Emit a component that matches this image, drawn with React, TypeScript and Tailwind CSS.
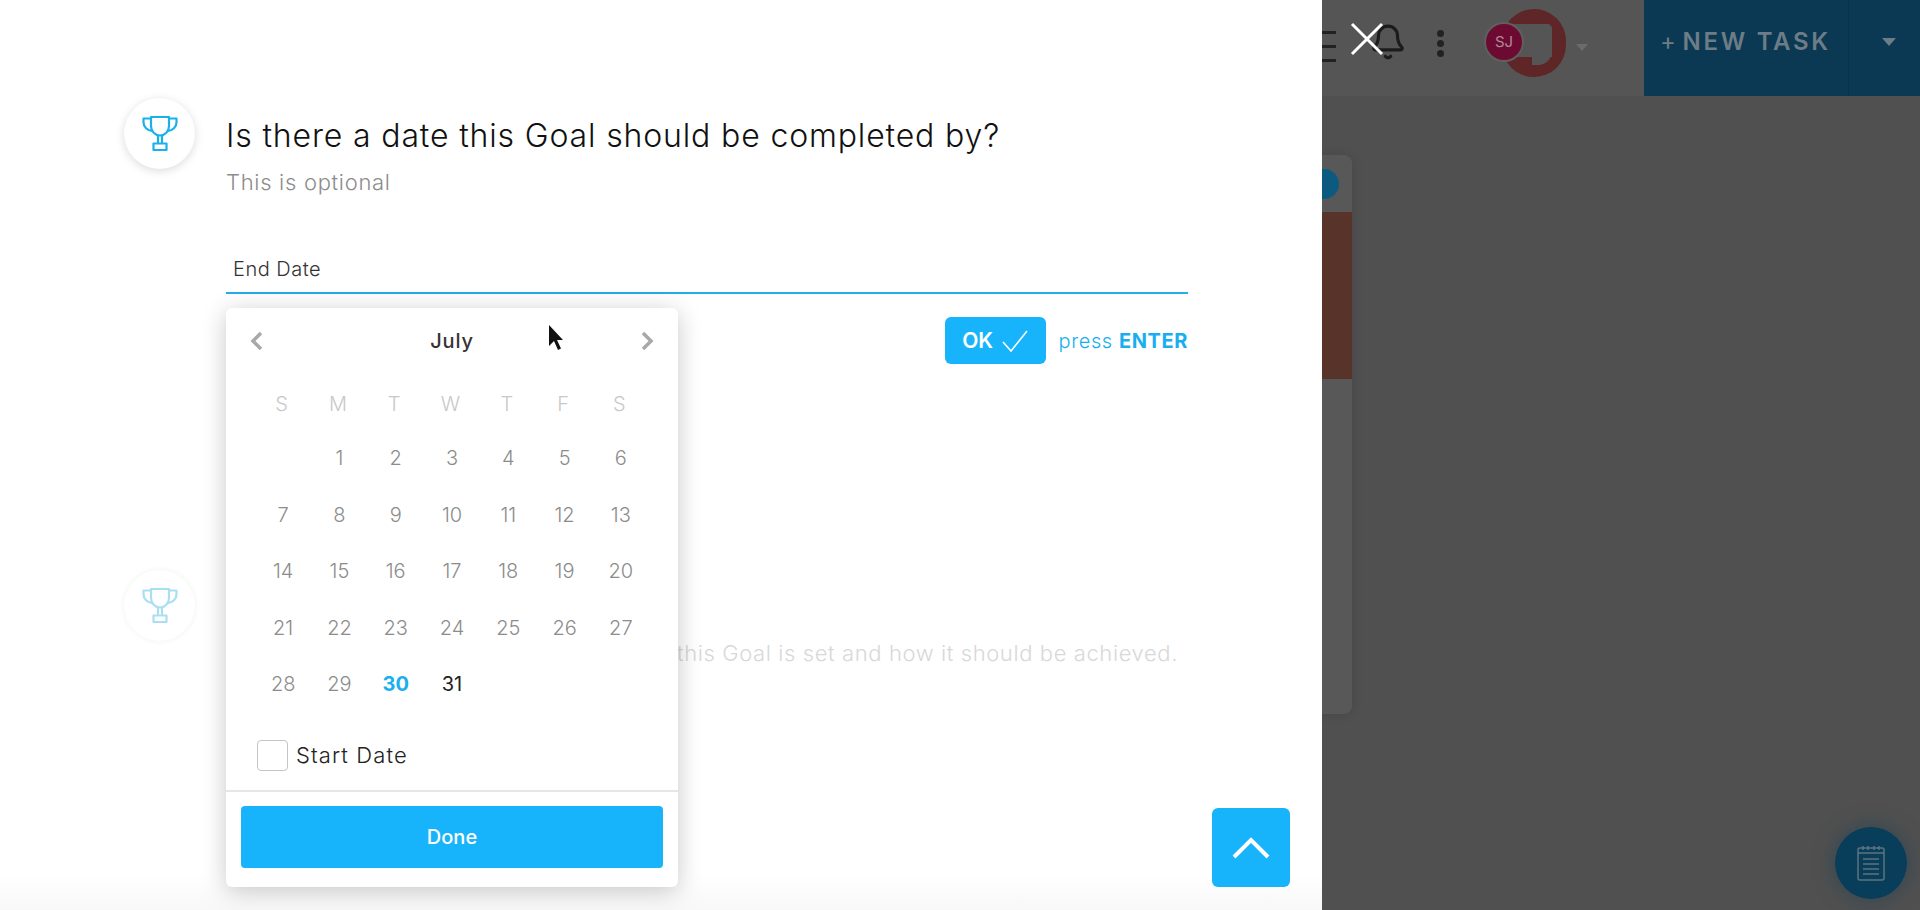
import { Bell } from "lucide-react";

const weeks = [
  ["", "1", "2", "3", "4", "5", "6"],
  ["7", "8", "9", "10", "11", "12", "13"],
  ["14", "15", "16", "17", "18", "19", "20"],
  ["21", "22", "23", "24", "25", "26", "27"],
  ["28", "29", "30", "31", "", "", ""],
];

function Trophy({ className }: { className?: string }) {
  return (
    <svg viewBox="0 0 36 36" className={className} fill="none" stroke="currentColor" strokeWidth="2.2" strokeLinejoin="round">
      <path d="M9 1.500h18v9c0 5.500-4 9.500-9 9.500s-9-4-9-9.500z" />
      <path d="M9 3H1.500v4c0 4.500 4 8 8.500 8.500M27 3h7.500v4c0 4.500-4 8-8.500 8.500" />
      <path d="M16 20v7h-1M20 20v7h1" />
      <rect x="11.500" y="28" width="13" height="6.500" />
    </svg>
  );
}

function Caret({ className }: { className?: string }) {
  return <div className={`h-0 w-0 border-x-[6px] border-t-[7px] border-x-transparent ${className}`} />;
}

function Background() {
  return (
    <div className="relative flex h-full flex-1 flex-col overflow-hidden bg-[#505050]">
      <header className="flex h-24 flex-none items-center bg-[#555555]">
        <div className="flex w-[14px] flex-none flex-col gap-[11px] self-start pt-[31px]">
          <div className="h-[3px] bg-[#222222]" />
          <div className="h-[3px] bg-[#222222]" />
          <div className="h-[3px] bg-[#222222]" />
        </div>
        <Bell className="mb-[12px] ml-[33px] h-[38px] w-[38px] flex-none text-[#1c1c1c]" strokeWidth={2} />
        <div className="mb-[10px] ml-[30px] flex flex-none flex-col gap-[3px]">
          <div className="h-[7px] w-[7px] rounded-full bg-[#222222]" />
          <div className="h-[7px] w-[7px] rounded-full bg-[#222222]" />
          <div className="h-[7px] w-[7px] rounded-full bg-[#222222]" />
        </div>
        <div className="relative mb-[10px] ml-[41px] h-[68px] w-[81px] flex-none">
          <div className="absolute left-[17px] top-0 h-[68px] w-[64px] rounded-full bg-[#5e2626]" />
          <div className="absolute left-[28px] top-[15px] h-[33px] w-[39px] rounded-tr-[5px] bg-[#555555]" />
          <div className="absolute left-[47px] top-[15px] h-[41px] w-[20px] rounded-br-[14px] rounded-tr-[5px] bg-[#555555]" />
          <div className="absolute left-[-1px] top-[13px] flex h-[40px] w-[40px] items-center justify-center rounded-full border-2 border-[#5f5f5f] bg-[#6d0a31] text-[15px] text-[#b08a9a]">
            SJ
          </div>
        </div>
        <Caret className="mb-[2px] ml-[10px] flex-none border-t-[#6b6b6b]" />
        <div className="ml-[56px] flex h-full flex-1 items-center bg-[#0b3852]">
          <div className="flex h-full w-[205px] items-center whitespace-nowrap border-r border-[#0d3248] pb-[13px] pl-[16px] text-[24px] font-semibold tracking-[2.7px] text-[#6c7d87]">
            <span className="mr-[4px] font-normal">+</span>NEW TASK
          </div>
          <Caret className="mb-[12px] ml-[33px] border-x-[7px] border-t-[8px] border-t-[#6c7d87]" />
        </div>
      </header>
      <div className="ml-[-200px] mt-[59px] h-[559px] w-[230px] flex-none rounded-[8px] bg-[#585858] pt-[57px] shadow-[0_0_12px_rgba(0,0,0,0.12)]">
        <div className="h-[167px] bg-[#57332a]" />
      </div>
      <div className="absolute left-0 top-[169px] h-[30px] w-[17px] rounded-r-full bg-[#0c5a80]" />
      <button className="absolute bottom-[11px] right-[13px] flex h-[72px] w-[72px] items-center justify-center rounded-full bg-[#093e5a] shadow-[0_0_20px_rgba(9,62,90,0.5)]">
        <svg viewBox="0 0 28 36" className="h-[36px] w-[28px]" fill="none" stroke="#5d7382" strokeWidth="1.500">
          <rect x="1" y="3" width="26" height="32" rx="2" />
          <path d="M1 8h26M6 1v4M11 1v4M17 1v4M22 1v4M6 14h16M6 19h16M6 24h16M6 29h16" />
        </svg>
      </button>
    </div>
  );
}

function DatePopover() {
  return (
    <div className="absolute left-0 top-[14px] z-10 w-[452px] rounded-[6px] bg-white shadow-[0_4px_24px_rgba(0,0,0,0.22)]">
      <div className="flex h-[66px] items-center justify-between px-[23px]">
        <svg viewBox="0 0 14 20" className="h-[20px] w-[14px]" fill="none" stroke="#a8a8a8" strokeWidth="3.500"><path d="M12 2 4 10l8 8" /></svg>
        <span className="text-[20px] font-medium tracking-[0.8px] text-[#333333]">July</span>
        <svg viewBox="0 0 14 20" className="h-[20px] w-[14px]" fill="none" stroke="#a8a8a8" strokeWidth="3.500"><path d="m2 2 8 8-8 8" /></svg>
      </div>
      <div className="mt-[4px] grid grid-cols-7 px-[29px] text-center text-[20px] font-light">
        {["S", "M", "T", "W", "T", "F", "S"].map((d, i) => (
          <div key={i} className="flex h-[52px] items-center justify-center pr-[3px] text-[#c8c8c8]">
            {d}
          </div>
        ))}
        {weeks.flat().map((d, i) => (
          <div
            key={i}
            className={`flex h-[56.500px] items-center justify-center ${
              d === "30" ? "font-bold text-[#18b0ee]" : d === "31" ? "font-normal text-[#222222]" : "text-[#8c8c8c]"
            }`}
          >
            {d}
          </div>
        ))}
      </div>
      <div className="mt-[26px] flex items-center gap-[8px] pl-[31px]">
        <div className="h-[31px] w-[31px] rounded-[4px] border border-[#c4c4c4]" />
        <span className="text-[22px] font-light tracking-[1.1px] text-[#222222]">Start Date</span>
      </div>
      <div className="mt-[18px] border-t-2 border-[#e6e6e6] px-[15px] pb-[19px] pt-[14px]">
        <button className="h-[62px] w-full rounded-[4px] bg-[#18b4fb] text-[20px] font-medium text-white">Done</button>
      </div>
    </div>
  );
}

function GoalPanel() {
  return (
    <div className="relative h-full w-[1322px] flex-none overflow-hidden bg-white bg-gradient-to-b from-white from-[96%] to-[#f8f8f8] pl-[124px] pr-[134px] pt-[98px]">
      <div className="flex gap-[31px]">
        <div className="flex h-[71px] w-[71px] flex-none items-center justify-center rounded-full bg-white shadow-[0_2px_10px_rgba(0,0,0,0.14)]">
          <Trophy className="h-[37px] w-[36px] text-[#1ab0ec]" />
        </div>
        <div className="pt-[18px]">
          <h1 className="whitespace-nowrap text-[32px] font-light leading-[40px] tracking-[0.85px] text-[#111111]">Is there a date this Goal should be completed by?</h1>
          <p className="mt-[12px] text-[22px] font-light leading-[28px] tracking-[0.7px] text-[#8c8c8c]">This is optional</p>
        </div>
      </div>
      <div className="ml-[102px] mt-[43px] flex h-[55px] items-center border-b-2 border-[#22aee8] pl-[7px] pt-[6px] text-[20px] font-light tracking-[0.5px] text-[#333333]">
        End Date
      </div>
      <div className="relative ml-[102px]">
        <DatePopover />
        <div className="flex items-center justify-end gap-[13px] pt-[23px]">
          <button className="flex h-[47px] w-[101px] items-center justify-center gap-[9px] rounded-[6px] bg-[#18b4fb] text-[21px] font-semibold text-white">
            OK
            <svg viewBox="0 0 26 22" className="h-[22px] w-[26px]" fill="none" stroke="white" strokeWidth="1.600"><path d="m1 12 8 9L25 1" /></svg>
          </button>
          <span className="text-[20px] font-light tracking-[0.6px] text-[#18aeef]">
            press <b className="font-bold">ENTER</b>
          </span>
        </div>
      </div>
      <div className="mt-[206px] flex gap-[31px]">
        <div className="flex h-[71px] w-[71px] flex-none items-center justify-center rounded-full bg-white shadow-[0_0_6px_rgba(0,0,0,0.06)]">
          <Trophy className="h-[37px] w-[36px] text-[#a9def5]" />
        </div>
      </div>
      <p className="mt-[-2px] pr-[10px] text-right text-[22px] font-light leading-[28px] tracking-[0.6px] text-[#d8d8d8]">
        Tell us why this Goal is set and how it should be achieved.
      </p>
      <button className="absolute bottom-[23px] right-[32px] flex h-[79px] w-[78px] items-center justify-center rounded-[6px] bg-[#18b4fb]">
        <svg viewBox="0 0 38 22" className="h-[22px] w-[38px]" fill="none" stroke="white" strokeWidth="4"><path d="M2 20 19 3l17 17" /></svg>
      </button>
      <svg viewBox="0 0 16 28" className="absolute left-[548px] top-[324px] z-20 h-[28px] w-[16px]">
        <path d="M1 1v21l5-5 4 9 3-1.500-4-8.500h6z" fill="#111111" />
      </svg>
    </div>
  );
}

export default function App() {
  return (
    <div className="relative flex h-[910px] w-[1920px] overflow-hidden font-['Inter',sans-serif]">
      <GoalPanel />
      <Background />
      <svg viewBox="0 0 34 34" className="absolute left-[1350px] top-[22px] h-[34px] w-[34px]" fill="none" stroke="white" strokeWidth="3">
        <path d="M2 2l30 30M32 2 2 32" />
      </svg>
    </div>
  );
}
